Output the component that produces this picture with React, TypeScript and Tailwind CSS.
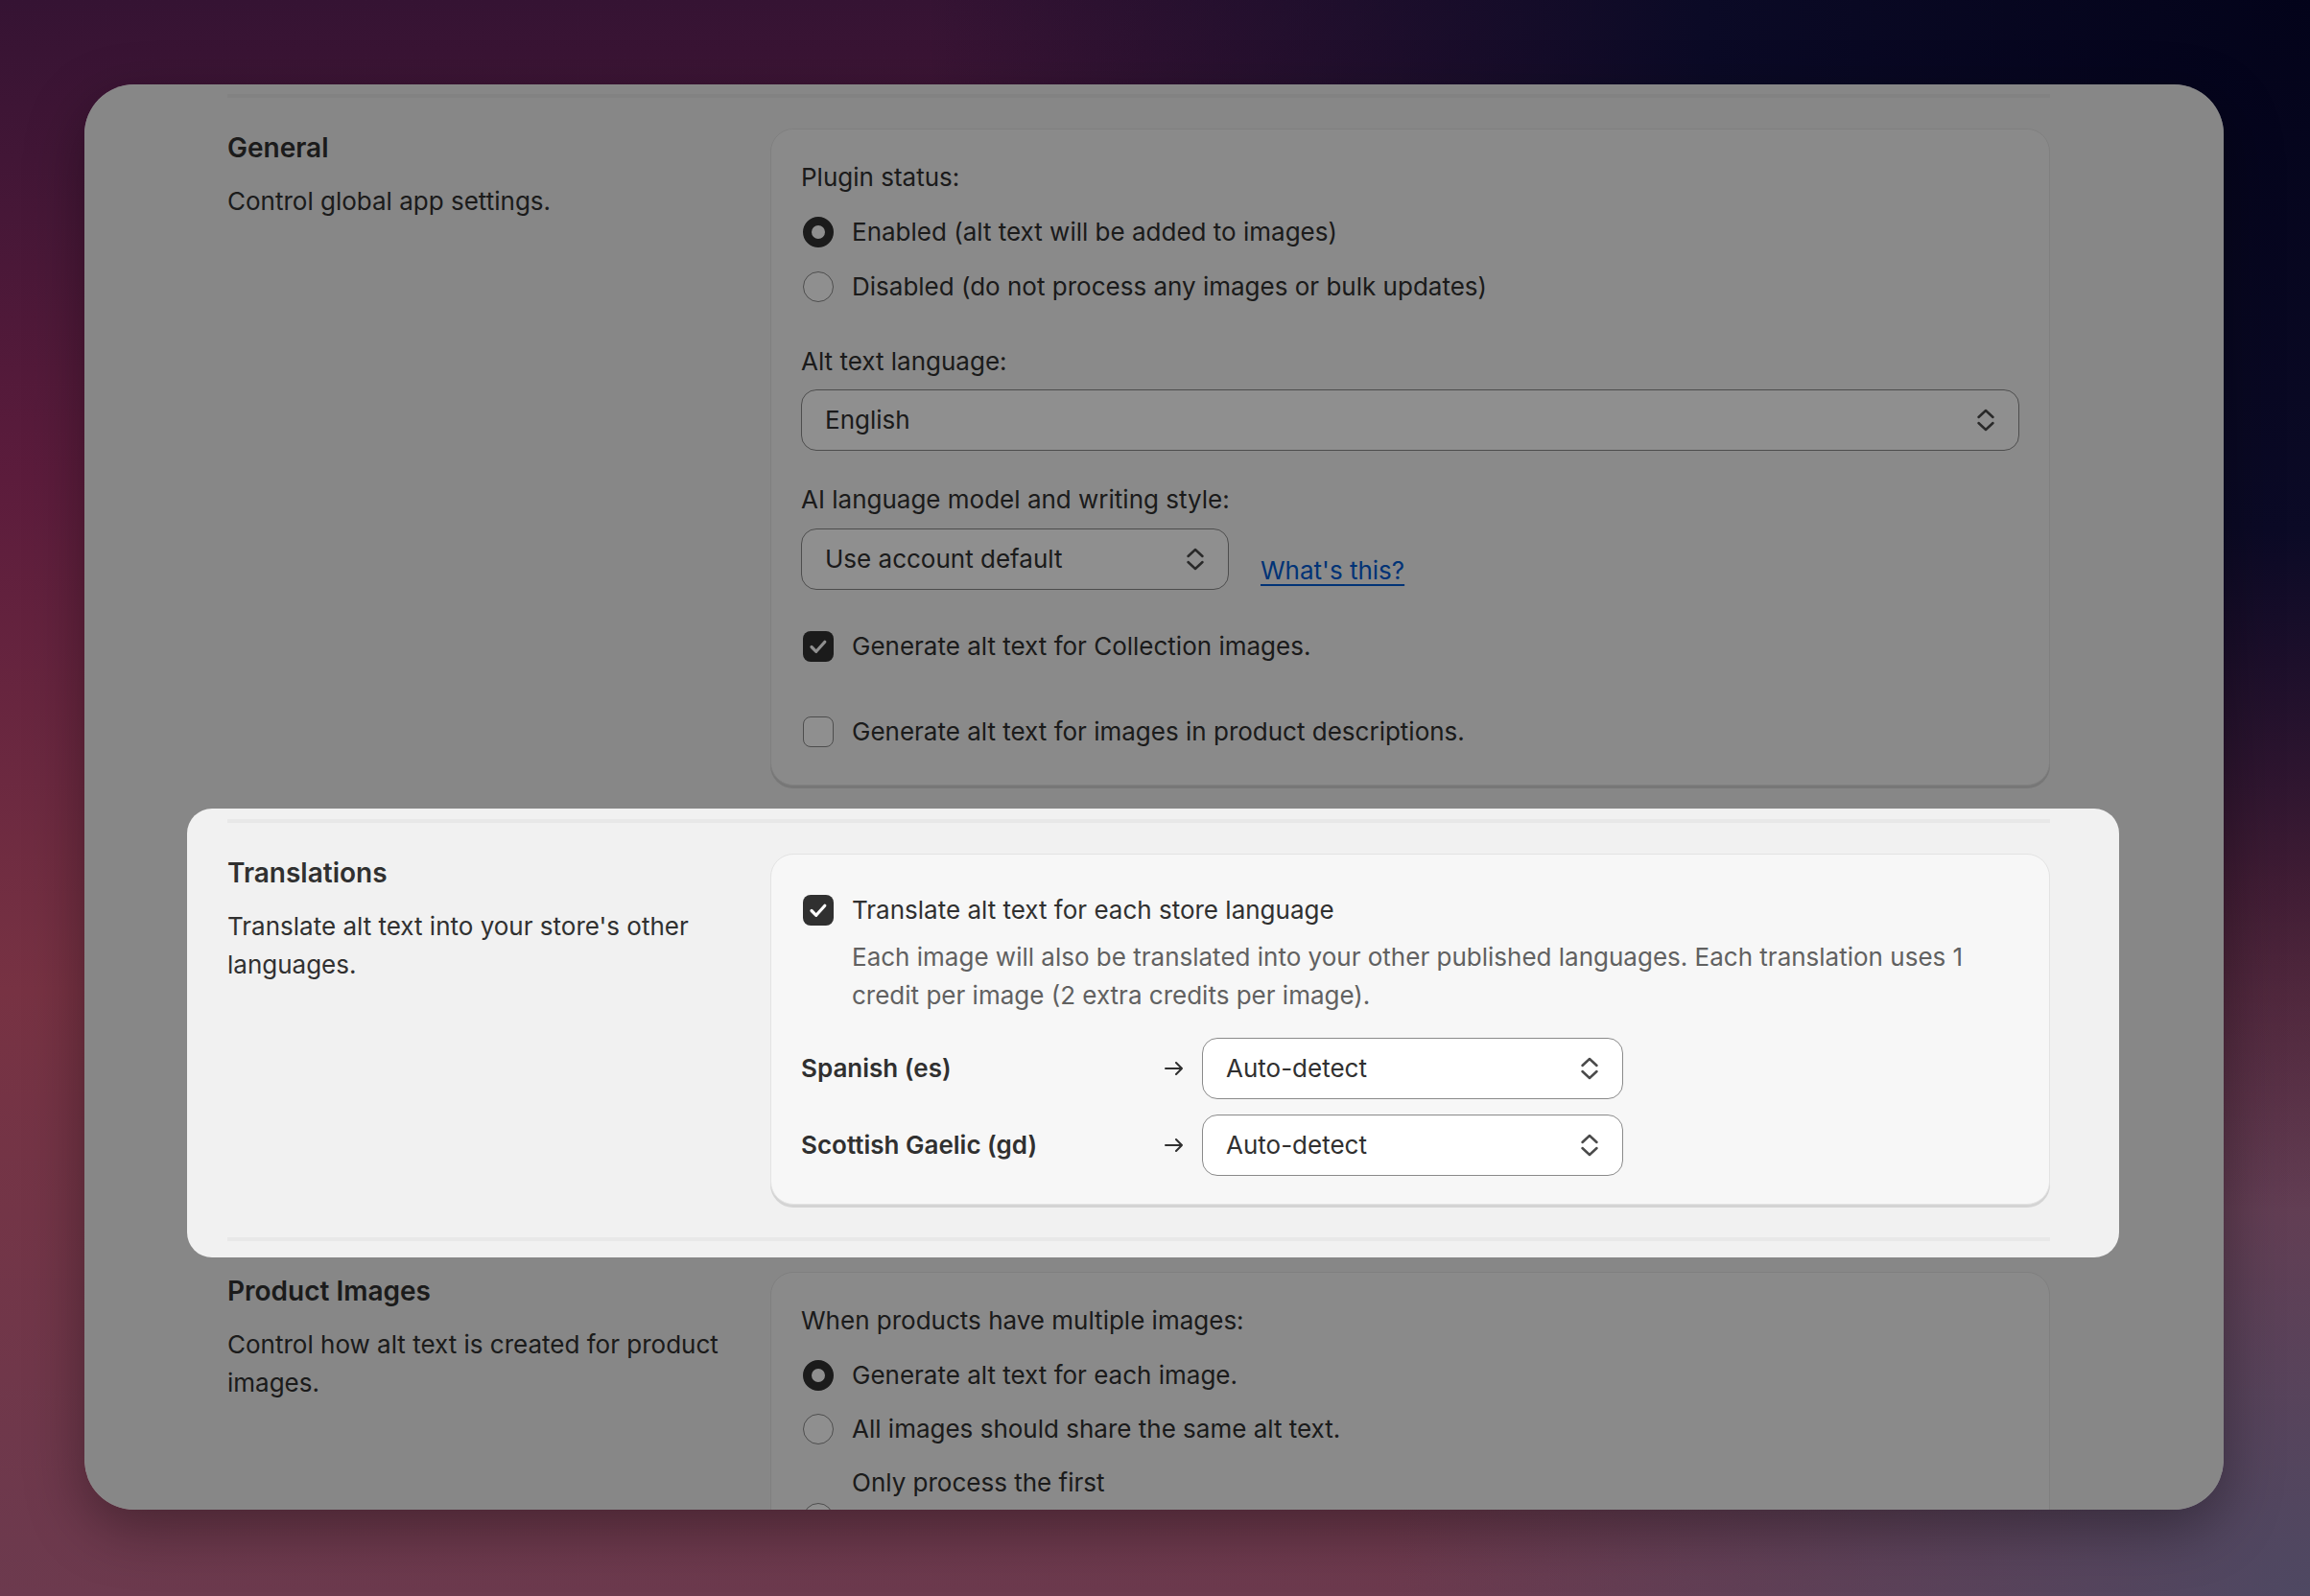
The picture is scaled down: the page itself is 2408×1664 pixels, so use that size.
import React from 'react';

const TEXT = 'text-[26px] leading-[40px] text-[#303030]';
const LANGS = ['Spanish (es)', 'Scottish Gaelic (gd)'];

function Chevrons() {
  return (
    <svg width="20" height="26" viewBox="0 0 20 26" fill="none" stroke="#4a4a4a" strokeWidth="2.5" strokeLinecap="round" strokeLinejoin="round" className="shrink-0">
      <path d="M2.5 10 10 3l7.5 7" />
      <path d="M2.5 16 10 23l7.5-7" />
    </svg>
  );
}

function Arrow() {
  return (
    <svg width="20" height="14" viewBox="0 0 20 14" fill="none" stroke="#303030" strokeWidth="2" strokeLinecap="round" strokeLinejoin="round" className="shrink-0">
      <path d="M1 7h17M12 1l6 6-6 6" />
    </svg>
  );
}

function Select({ value, className = '' }: { value: string; className?: string }) {
  return (
    <div className={`flex h-[64px] items-center justify-between rounded-[16px] border border-[#8a8a8a] bg-white pl-[24px] pr-[24px] ${className}`}>
      <span className={TEXT}>{value}</span>
      <Chevrons />
    </div>
  );
}

function Radio({ checked, children }: { checked?: boolean; children: React.ReactNode }) {
  return (
    <div className="flex items-center gap-[19px]">
      <span className={checked
        ? 'ml-[2px] h-8 w-8 shrink-0 rounded-full border-[9px] border-[#303030] bg-white'
        : 'ml-[2px] h-8 w-8 shrink-0 rounded-full border-[1.5px] border-[#8a8a8a] bg-white'} />
      {children}
    </div>
  );
}

function Check({ checked, className = '', children }: { checked?: boolean; className?: string; children: React.ReactNode }) {
  return (
    <div className={`flex items-center gap-[19px] ${className}`}>
      {checked ? (
        <span className="ml-[2px] flex h-8 w-8 shrink-0 items-center justify-center rounded-[8px] bg-[#303030]">
          <svg width="32" height="32" viewBox="0 0 32 32" fill="none" stroke="#fff" strokeWidth="3.2" strokeLinecap="round" strokeLinejoin="round">
            <path d="M9 16.5l4.8 4.8 9-10" />
          </svg>
        </span>
      ) : (
        <span className="ml-[2px] h-8 w-8 shrink-0 rounded-[8px] border-[1.5px] border-[#8a8a8a] bg-white" />
      )}
      <span className={TEXT}>{children}</span>
    </div>
  );
}

function Card({ className = '', children }: { className?: string; children: React.ReactNode }) {
  return (
    <div className={`rounded-[24px] border border-[#e3e3e3] bg-[#f7f7f7] px-[31px] shadow-[0_3px_0_0_#d4d4d4] ${className}`}>
      {children}
    </div>
  );
}

function Section({ title, desc, children, className = '' }: { title: string; desc: string; children: React.ReactNode; className?: string }) {
  return (
    <div className={`grid grid-cols-[534px_1fr] gap-[32px] ${className}`}>
      <div>
        <h2 className="text-[28px] font-semibold leading-[40px] text-[#303030]">{title}</h2>
        <p className={`${TEXT} mt-[16px]`}>{desc}</p>
      </div>
      {children}
    </div>
  );
}

const Divider = () => <div className="h-1 bg-[#e8e8e8]" />;

export default function App() {
  return (
    <div className="h-screen w-full overflow-hidden pl-[88px] pt-[88px] [font-family:Inter,'Noto_Sans',sans-serif] [background-image:radial-gradient(ellipse_75%_95%_at_100%_0%,#03031a_0%,#0b0a26_35%,transparent_80%),radial-gradient(ellipse_40%_45%_at_100%_100%,#4e4862_0%,transparent_100%),linear-gradient(180deg,#351333_0%,#5c1c3c_30%,#773243_62%,#6c3a4e_100%)]">
      <div className="relative h-[1486px] w-[2230px] overflow-hidden rounded-[52px] bg-[#f1f1f1] pl-[149px] pr-[181px] pt-[10px] shadow-[0_20px_60px_rgba(0,0,0,0.35)]">
        <div className="pointer-events-none absolute inset-0 z-10 bg-[rgba(0,0,0,0.44)]" />

        <Divider />
        <Section title="General" desc="Control global app settings." className="pt-[32px] pb-[24px]">
          <Card className="pt-[30px] pb-[35px]">
            <p className={TEXT}>Plugin status:</p>
            <div className="mt-[17px] flex flex-col gap-[17px]">
              <Radio checked><span className={TEXT}>Enabled (alt text will be added to images)</span></Radio>
              <Radio><span className={TEXT}>Disabled (do not process any images or bulk updates)</span></Radio>
            </div>
            <p className={`${TEXT} mt-[38px]`}>Alt text language:</p>
            <Select value="English" className="mt-[9px]" />
            <p className={`${TEXT} mt-[31px]`}>AI language model and writing style:</p>
            <div className="mt-[10px] flex items-end gap-[33px]">
              <Select value="Use account default" className="w-[446px]" />
              <a className="text-[26px] leading-[40px] text-[#005bd3] underline decoration-2 underline-offset-[5px]">What's this?</a>
            </div>
            <Check checked className="mt-[39px]">Generate alt text for Collection images.</Check>
            <Check className="mt-[49px]">Generate alt text for images in product descriptions.</Check>
          </Card>
        </Section>

        <div className="relative z-20 -ml-[42px] -mr-[72px] rounded-[26px] bg-[#f1f1f1] pb-[17px] pl-[42px] pr-[72px] pt-[11px]">
          <Divider />
          <Section title="Translations" desc="Translate alt text into your store's other languages." className="pt-[32px] pb-[34px]">
            <Card className="pt-[38px] pb-[29px]">
              <Check checked>Translate alt text for each store language</Check>
              <p className="ml-[53px] mt-[9px] text-[26px] leading-[40px] text-[#616161]">
                Each image will also be translated into your other published languages. Each translation uses 1 credit per image (2 extra credits per image).
              </p>
              <div className="mt-[24px] flex flex-col gap-[16px]">
                {LANGS.map(l => (
                  <div key={l} className="flex items-center">
                    <span className="w-[379px] shrink-0 text-[26px] font-semibold leading-[40px] text-[#303030]">{l}</span>
                    <Arrow />
                    <Select value="Auto-detect" className="ml-[19px] w-[439px]" />
                  </div>
                ))}
              </div>
            </Card>
          </Section>
          <Divider />
        </div>

        <Section title="Product Images" desc="Control how alt text is created for product images." className="pt-[15px]">
          <Card className="pt-[30px] pb-[40px]">
            <p className={TEXT}>When products have multiple images:</p>
            <div className="mt-[17px] flex flex-col gap-[16px]">
              <Radio checked><span className={TEXT}>Generate alt text for each image.</span></Radio>
              <Radio><span className={TEXT}>All images should share the same alt text.</span></Radio>
              <Radio>
                <div>
                  <p className={TEXT}>Only process the first</p>
                  <Select value="1" className="mt-[9px] w-[250px]" />
                </div>
              </Radio>
            </div>
          </Card>
        </Section>
      </div>
    </div>
  );
}
